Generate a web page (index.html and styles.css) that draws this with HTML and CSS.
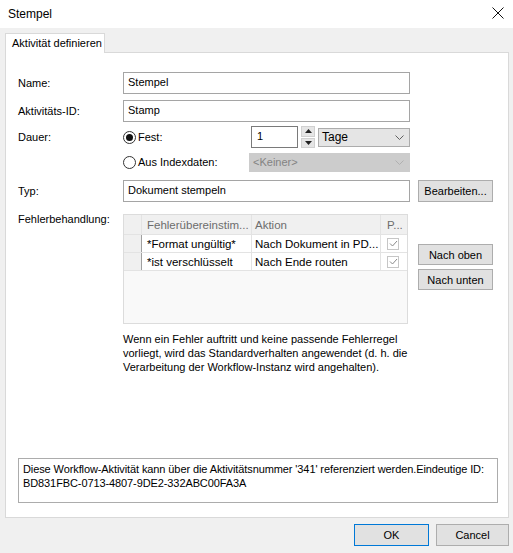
FILE: index.html
```html
<!DOCTYPE html>
<html lang="de">
<head>
<meta charset="utf-8">
<title>Stempel</title>
<link rel="stylesheet" href="styles.css">
</head>
<body>
<div class="window">
  <div class="titlebar">
    <span class="title">Stempel</span>
    <svg class="close" width="12" height="12" viewBox="0 0 12 12"><path d="M0.5 0.5L11.5 11.5M11.5 0.5L0.5 11.5" stroke="#111" stroke-width="1" fill="none"/></svg>
  </div>
  <div class="tabs"><div class="tab">Aktivität definieren</div></div>
  <div class="panel">
    <div class="row r-name">
      <span class="label">Name:</span>
      <div class="input wide">Stempel</div>
    </div>
    <div class="row r-id">
      <span class="label">Aktivitäts-ID:</span>
      <div class="input wide">Stamp</div>
    </div>
    <div class="row r-dauer">
      <span class="label">Dauer:</span>
      <div class="opts">
        <div class="radio-item fest"><span class="radio checked"></span><span>Fest:</span></div>
        <div class="input spin">1</div>
        <div class="spinner">
          <span class="sbtn"><svg width="7" height="4" viewBox="0 0 7 4"><path d="M0 4L3.5 0L7 4Z" fill="#222"/></svg></span>
          <span class="sbtn"><svg width="7" height="4" viewBox="0 0 7 4"><path d="M0 0L3.5 4L7 0Z" fill="#222"/></svg></span>
        </div>
        <div class="combo tage"><span>Tage</span><svg class="chev" width="9" height="5" viewBox="0 0 9 5"><path d="M0.5 0.5L4.5 4.5L8.5 0.5" stroke="#606060" fill="none"/></svg></div>
      </div>
    </div>
    <div class="row r-aus">
      <span class="label"></span>
      <div class="opts">
        <div class="radio-item aus"><span class="radio"></span><span>Aus Indexdaten:</span></div>
        <div class="combo disabled"><span>&lt;Keiner&gt;</span><svg class="chev" width="9" height="5" viewBox="0 0 9 5"><path d="M0.5 0.5L4.5 4.5L8.5 0.5" stroke="#b0b0b0" fill="none"/></svg></div>
      </div>
    </div>
    <div class="row r-typ">
      <span class="label">Typ:</span>
      <div class="input wide">Dokument stempeln</div>
      <button class="btn side">Bearbeiten...</button>
    </div>
    <div class="row r-fehler">
      <span class="label top">Fehlerbehandlung:</span>
      <div class="grid">
        <div class="grow head">
          <span class="rh"></span>
          <span class="c1">Fehlerübereinstim...</span>
          <span class="c2">Aktion</span>
          <span class="c3">P...</span>
        </div>
        <div class="grow">
          <span class="rh"></span>
          <span class="c1">*Format ungültig*</span>
          <span class="c2">Nach Dokument in PD...</span>
          <span class="c3"><span class="chk"><svg width="9" height="7" viewBox="0 0 9 7"><path d="M1 3.5L3.5 6L8 1" stroke="#8a8a8a" fill="none"/></svg></span></span>
        </div>
        <div class="grow">
          <span class="rh"></span>
          <span class="c1">*ist verschlüsselt</span>
          <span class="c2">Nach Ende routen</span>
          <span class="c3"><span class="chk"><svg width="9" height="7" viewBox="0 0 9 7"><path d="M1 3.5L3.5 6L8 1" stroke="#8a8a8a" fill="none"/></svg></span></span>
        </div>
      </div>
      <div class="movebtns">
        <button class="btn side">Nach oben</button>
        <button class="btn side">Nach unten</button>
      </div>
    </div>
    <div class="row r-note">
      <span class="label"></span>
      <p class="note">Wenn ein Fehler auftritt und keine passende Fehlerregel vorliegt, wird das Standardverhalten angewendet (d. h. die Verarbeitung der Workflow-Instanz wird angehalten).</p>
    </div>
    <div class="info">Diese Workflow-Aktivität kann über die Aktivitätsnummer '341' referenziert werden.Eindeutige ID: BD831FBC-0713-4807-9DE2-332ABC00FA3A</div>
  </div>
  <div class="footer">
    <button class="btn foot ok">OK</button>
    <button class="btn foot cancel">Cancel</button>
  </div>
</div>
</body>
</html>
```

FILE: styles.css
```css
* { box-sizing: border-box; }
html, body { margin: 0; padding: 0; }
body {
  width: 513px;
  height: 553px;
  background: #f0f0f0;
  font-family: "Liberation Sans", Arial, sans-serif;
  font-size: 11px;
  color: #000;
  overflow: hidden;
}
.window { width: 513px; height: 553px; display: flex; flex-direction: column; }

.titlebar {
  height: 28px;
  background: #fff;
  display: flex;
  align-items: center;
  justify-content: space-between;
  padding: 0 9px 0 8px;
  font-size: 12px;
}
.close { display: block; margin-bottom: 2px; }

.tabs { padding: 5px 0 0 5px; display: flex; }
.tab {
  width: 100px;
  height: 20px;
  background: #fff;
  border: 1px solid #d9d9d9;
  border-bottom: none;
  padding: 3px 0 0 6px;
  position: relative;
  z-index: 1;
  margin-bottom: -1px;
}

.panel {
  margin-left: 5px;
  width: 504px;
  height: 466px;
  background: #fff;
  border: 1px solid #d9d9d9;
  padding: 19px 10px 14px 12px;
  display: flex;
  flex-direction: column;
}

.row { display: flex; align-items: center; }
.label { width: 105px; flex: none; }
.label.top { align-self: flex-start; margin-top: -1px; }

.r-name { height: 22px; }
.r-id { height: 22px; margin-top: 6px; }
.r-dauer { height: 22px; margin-top: 4px; }
.r-aus { height: 20px; margin-top: 4px; }
.r-typ { height: 22px; margin-top: 8px; }
.r-fehler { margin-top: 12px; align-items: flex-start; }
.r-note { margin-top: 8px; align-items: flex-start; }

.input {
  height: 22px;
  border: 1px solid #a5a5a5;
  background: #fff;
  padding: 3px 0 0 4px;
  white-space: nowrap;
}
.input.wide { width: 287px; }

.opts { display: flex; align-items: center; }
.radio-item { display: flex; align-items: center; gap: 2px; }
.radio-item.fest { width: 128px; }
.radio-item.aus { width: 126px; }
.radio {
  width: 13px;
  height: 13px;
  border: 1px solid #333;
  border-radius: 50%;
  display: flex;
  align-items: center;
  justify-content: center;
}
.radio.checked::after {
  content: "";
  width: 7px;
  height: 7px;
  border-radius: 50%;
  background: #111;
}

.input.spin { width: 47px; height: 22px; border-color: #7a7a7a; padding-left: 5px; }
.spinner {
  margin-left: 3px;
  width: 14px;
  height: 22px;
  display: flex;
  flex-direction: column;
  gap: 1px;
}
.sbtn {
  flex: 1;
  background: #e5e5e5;
  border: 1px solid #d0d0d0;
  display: flex;
  align-items: center;
  justify-content: center;
}
.combo {
  height: 19px;
  background: #e5e5e5;
  border: 1px solid #acacac;
  display: flex;
  align-items: center;
  justify-content: space-between;
  padding: 0 5px 0 3px;
  font-size: 12px;
}
.combo.tage { width: 92px; margin-left: 3px; }
.combo.disabled {
  width: 161px;
  background: #cccccc;
  border-color: #cccccc;
  color: #838383;
  font-size: 11px;
}

.btn {
  font-family: inherit;
  font-size: 11px;
  color: #000;
  background: #e1e1e1;
  border: 1px solid #adadad;
  padding: 0;
  margin: 0;
  display: flex;
  align-items: center;
  justify-content: center;
}
.btn.side { width: 75px; height: 22px; margin-left: 8px; }

.grid {
  width: 285px;
  height: 110px;
  border: 1px solid #dcdcdc;
  background: #f9f9f9;
  font-size: 11.5px;
  flex: none;
}
.grow {
  display: flex;
  height: 18px;
  background: #fff;
  border-bottom: 1px solid #e3e3e3;
}
.grow.head { height: 20px; background: #f0f0f0; color: #6d6d6d; border-bottom: 1px solid #e3e3e3; }
.grow > span { display: flex; align-items: center; padding-left: 4px; white-space: nowrap; overflow: hidden; border-right: 1px solid #e3e3e3; }
.grow .rh { width: 18px; background: #f0f0f0; border-right: 1px solid #a0a0a0; padding: 0; }
.grow.head .rh { border-right: 1px solid #e3e3e3; }
.grow .c1 { width: 110px; padding-left: 5px; }
.grow .c2 { width: 129px; padding-left: 3px; }
.grow .c3 { flex: 1; border-right: none; padding-left: 6px; }
.chk {
  width: 12px;
  height: 12px;
  border: 1px solid #c6c6c6;
  background: #fff;
  display: flex;
  align-items: center;
  justify-content: center;
}

.movebtns { display: flex; flex-direction: column; gap: 4px; margin-top: 30px; margin-left: 2px; }
.movebtns .btn.side { height: 21px; }

.note { margin: 0; width: 285px; line-height: 14px; }

.info {
  margin-top: auto;
  height: 45px;
  border: 1px solid #acacac;
  background: #fff;
  padding: 3px 3px 3px 4px;
  line-height: 14px;
  letter-spacing: -0.1px;
}

.footer {
  display: flex;
  justify-content: flex-end;
  gap: 7px;
  padding: 6px 4px 0 0;
}
.btn.foot { height: 22px; }
.btn.ok { width: 75px; border-color: #0078d7; }
.btn.cancel { width: 73px; }
```
